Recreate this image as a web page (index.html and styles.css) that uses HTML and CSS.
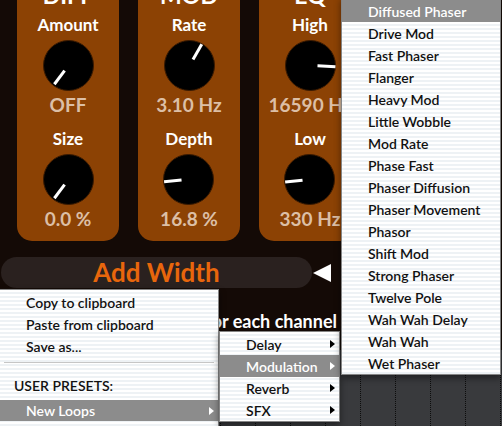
FILE: index.html
```html
<!DOCTYPE html>
<html>
<head>
<meta charset="utf-8">
<link rel="stylesheet" href="styles.css">
</head>
<body>
<div class="screen">
  <div class="plugin">
    <div class="panels">
      <section class="panel">
        <div class="title">DIFF</div>
        <div class="control">
          <div class="label">Amount</div>
          <svg class="knob" viewBox="0 0 51 51"><circle cx="25.5" cy="25.5" r="25" class="knob-body"/><line x1="25.5" y1="19" x2="25.5" y2="2" class="knob-mark" transform="rotate(217 25.5 25.5)"/></svg>
          <div class="value">OFF</div>
        </div>
        <div class="control">
          <div class="label">Size</div>
          <svg class="knob" viewBox="0 0 51 51"><circle cx="25.5" cy="25.5" r="25" class="knob-body"/><line x1="25.5" y1="19" x2="25.5" y2="2" class="knob-mark" transform="rotate(217 25.5 25.5)"/></svg>
          <div class="value">0.0 %</div>
        </div>
      </section>
      <section class="panel">
        <div class="title">MOD</div>
        <div class="control">
          <div class="label">Rate</div>
          <svg class="knob" viewBox="0 0 51 51"><circle cx="25.5" cy="25.5" r="25" class="knob-body"/><line x1="25.5" y1="18.5" x2="25.5" y2="1" class="knob-mark" transform="rotate(30 25.5 25.5)"/></svg>
          <div class="value">3.10 Hz</div>
        </div>
        <div class="control">
          <div class="label">Depth</div>
          <svg class="knob" viewBox="0 0 51 51"><circle cx="25.5" cy="25.5" r="25" class="knob-body"/><line x1="25.5" y1="18.5" x2="25.5" y2="1" class="knob-mark" transform="rotate(265 25.5 25.5)"/></svg>
          <div class="value">16.8 %</div>
        </div>
      </section>
      <section class="panel">
        <div class="title">EQ</div>
        <div class="control">
          <div class="label">High</div>
          <svg class="knob" viewBox="0 0 51 51"><circle cx="25.5" cy="25.5" r="25" class="knob-body"/><line x1="25.5" y1="18.5" x2="25.5" y2="0.5" class="knob-mark" transform="rotate(93 25.5 25.5)"/></svg>
          <div class="value">16590 Hz</div>
        </div>
        <div class="control">
          <div class="label">Low</div>
          <svg class="knob" viewBox="0 0 51 51"><circle cx="25.5" cy="25.5" r="25" class="knob-body"/><line x1="25.5" y1="18.5" x2="25.5" y2="1" class="knob-mark" transform="rotate(264 25.5 25.5)"/></svg>
          <div class="value">330 Hz</div>
        </div>
      </section>
    </div>
    <div class="width-row">
      <div class="width-bar">Add Width</div>
      <span class="width-arrow"></span>
    </div>
    <div class="caption">for each channel</div>
  </div>
  <div class="daw">
    <span class="track"></span><span class="track"></span><span class="track"></span><span class="track"></span><span class="track"></span><span class="track"></span><span class="track"></span><span class="track"></span><span class="track"></span>
  </div>

  <div class="menu menu-main">
    <div class="item">Copy to clipboard</div>
    <div class="item">Paste from clipboard</div>
    <div class="item">Save as...</div>
    <div class="separator"></div>
    <div class="item header">USER PRESETS:</div>
    <div class="item selected loops">New Loops<span class="sub"></span></div>
  </div>

  <div class="menu menu-cat">
    <div class="item">Delay<span class="sub"></span></div>
    <div class="item selected">Modulation<span class="sub"></span></div>
    <div class="item">Reverb<span class="sub"></span></div>
    <div class="item">SFX<span class="sub"></span></div>
  </div>

  <div class="menu menu-list">
    <div class="item selected">Diffused Phaser</div>
    <div class="item">Drive Mod</div>
    <div class="item">Fast Phaser</div>
    <div class="item">Flanger</div>
    <div class="item">Heavy Mod</div>
    <div class="item">Little Wobble</div>
    <div class="item">Mod Rate</div>
    <div class="item">Phase Fast</div>
    <div class="item">Phaser Diffusion</div>
    <div class="item">Phaser Movement</div>
    <div class="item">Phasor</div>
    <div class="item">Shift Mod</div>
    <div class="item">Strong Phaser</div>
    <div class="item">Twelve Pole</div>
    <div class="item">Wah Wah Delay</div>
    <div class="item">Wah Wah</div>
    <div class="item">Wet Phaser</div>
  </div>
</div>
</body>
</html>
```
FILE: styles.css
```css
* { box-sizing: border-box; }
html, body { margin: 0; padding: 0; }
body {
  background: #140a06;
  font-family: Lato, "Open Sans", sans-serif;
}
.screen {
  position: relative;
  width: 502px;
  height: 426px;
  overflow: hidden;
  background: #140a06;
}
.plugin {
  height: 350px;
  overflow: hidden;
  background: #140a06;
}
.panels {
  display: flex;
  gap: 19px;
  padding-left: 17px;
  margin-top: -22px;
}
.panel {
  width: 102px;
  height: 263px;
  flex: none;
  background: #8c4204;
  border-radius: 15px;
  display: flex;
  flex-direction: column;
  align-items: center;
  gap: 7px;
  color: #fff;
  font-weight: 700;
}
.title {
  height: 28px;
  line-height: 34px;
  font-size: 23px;
  margin-bottom: -1px;
}
.control {
  display: flex;
  flex-direction: column;
  align-items: center;
}
.label {
  height: 26px;
  line-height: 26px;
  font-size: 17px;
  margin-bottom: 2px;
}
.knob {
  width: 51px;
  height: 51px;
  display: block;
}
.knob-body { fill: #000; stroke: #3b1b02; stroke-width: 1; }
.knob-mark { stroke: #fff; stroke-width: 3; }
.value {
  height: 28px;
  line-height: 28px;
  font-size: 19px;
  color: #dcbfa6;
  white-space: nowrap;
}
.width-row {
  display: flex;
  align-items: center;
  margin-top: 16px;
  padding-left: 1px;
}
.width-bar {
  width: 311px;
  height: 31px;
  border-radius: 16px;
  background: #2a211f;
  color: #e8660c;
  font-weight: 700;
  font-size: 26px;
  line-height: 31px;
  text-align: center;
}
.width-arrow {
  width: 0;
  height: 0;
  margin-left: 1px;
  border-right: 18px solid #fff;
  border-top: 9px solid transparent;
  border-bottom: 9px solid transparent;
}
.caption {
  margin-top: 23px;
  height: 20px;
  line-height: 20px;
  padding-right: 165px;
  text-align: right;
  color: #fff;
  font-weight: 700;
  font-size: 18px;
  white-space: nowrap;
}
.daw {
  height: 76px;
  background: #393a3d;
  display: flex;
  padding-left: 220px;
}
.track {
  width: 35px;
  flex: none;
  border-left: 1px dotted #0c0c0c;
}

/* popup menus */
.menu {
  position: absolute;
  border: 1px solid #858585;
  background: repeating-linear-gradient(to bottom, #ffffff 0 2px, #eef2f5 2px 4px);
  box-shadow: 0 3px 7px rgba(0,0,0,0.45);
  font-weight: 600;
  font-size: 14px;
  color: #111;
}
.item {
  display: flex;
  align-items: center;
  height: 22px;
  padding-left: 26px;
  padding-right: 4px;
  white-space: nowrap;
}
.item.selected {
  background: #8c8c8c;
  color: #fff;
}
.sub {
  margin-left: auto;
  width: 0;
  height: 0;
  border-left: 5px solid #000;
  border-top: 4px solid transparent;
  border-bottom: 4px solid transparent;
}
.selected .sub { border-left-color: #fff; }
.menu-main {
  left: -1px;
  top: 289px;
  width: 220px;
  height: 150px;
  padding-top: 1px;
}
.separator {
  height: 17px;
  margin: 0 4px;
  padding-top: 5px;
}
.separator::before {
  content: "";
  display: block;
  height: 1px;
  background: #c6c6c6;
}
.item.header { padding-left: 14px; }
.item.loops { margin-top: 4px; height: 21px; }
.menu-cat {
  left: 219px;
  top: 331px;
  width: 121px;
  padding-top: 1px;
}
.menu-list {
  left: 341px;
  top: -3px;
  width: 160px;
  padding-top: 2px;
}
```
